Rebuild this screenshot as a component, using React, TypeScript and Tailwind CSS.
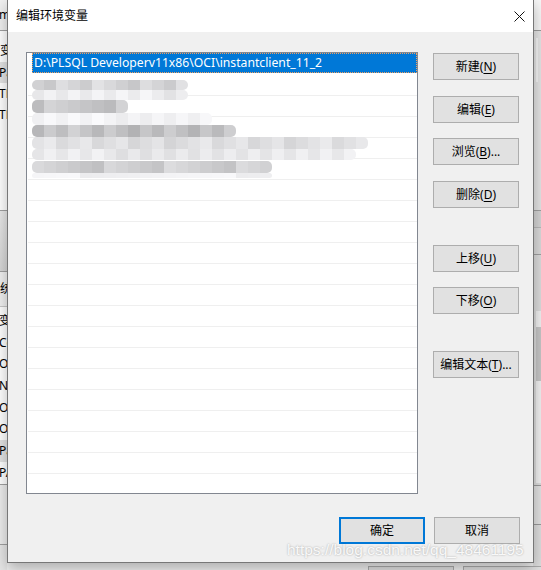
import React from 'react'

type Blob = { y: number; h: number; x0: number; x1: number; lo: number; hi: number }

// censored entries: mosaic cells, coordinates relative to list content box
const blobs: Blob[] = [
  { y: 27, h: 10, x0: 5, x1: 160, lo: 196, hi: 226 },
  { y: 37, h: 10, x0: 5, x1: 160, lo: 226, hi: 246 },
  { y: 47, h: 13, x0: 5, x1: 101, lo: 184, hi: 212 },
  { y: 60, h: 12, x0: 5, x1: 183, lo: 236, hi: 250 },
  { y: 72, h: 12, x0: 5, x1: 209, lo: 178, hi: 210 },
  { y: 84, h: 12, x0: 5, x1: 340, lo: 212, hi: 234 },
  { y: 96, h: 11, x0: 5, x1: 328, lo: 222, hi: 242 },
  { y: 108, h: 12, x0: 5, x1: 235, lo: 192, hi: 220 },
  { y: 120, h: 5, x0: 5, x1: 235, lo: 236, hi: 248 },
]

function Mosaic() {
  return (
    <div className="absolute inset-0 blur-[0.5px] pointer-events-none">
      {blobs.map((b, r) => {
        const n = Math.ceil((b.x1 - b.x0) / 12)
        return (
          <div key={r} className="absolute flex rounded-[5px] overflow-hidden" style={{ top: b.y, left: b.x0, height: b.h }}>
            {Array.from({ length: n }).map((_, i) => {
              const v = b.lo + ((i * 53 + r * 97 + 13) % (b.hi - b.lo + 1))
              return <div key={i} className="w-[12px] h-full" style={{ background: `rgb(${v},${v},${v + 2})` }} />
            })}
          </div>
        )
      })}
    </div>
  )
}

function Btn({ label, mn, tail = '', cls = '' }: { label: string; mn?: string; tail?: string; cls?: string }) {
  return (
    <button className={`w-[86px] h-[27px] bg-[#e1e1e1] border border-[#adadad] text-[12px] text-black flex items-center justify-center leading-none ${cls}`}>
      {label}
      {mn && (
        <>
          (<span className="underline underline-offset-2">{mn}</span>){tail}
        </>
      )}
    </button>
  )
}

const leftRows = ['变', 'Co', 'Or', 'NI', 'OI', 'OS', 'Pa', 'PA']

export default function App() {
  return (
    <div className="relative w-[541px] h-[570px] overflow-hidden bg-[#f0f0f0] font-['Noto_Sans','Noto_Sans_CJK_SC',sans-serif] text-black">
      {/* window behind, left edge */}
      <div className="absolute left-0 top-0 w-[7px] h-full overflow-hidden flex flex-col text-[12px] leading-none whitespace-nowrap">
        <div className="h-[31px] shrink-0 bg-[#f0f0f0] border-b border-[#a0a0a0] flex items-center -ml-[1px]">m</div>
        <div className="h-[31px] shrink-0 bg-white flex items-end pb-[5px]">变</div>
        <div className="h-[21px] shrink-0 bg-[#e3e3e3] flex items-center -ml-[1px]">Pa</div>
        <div className="h-[21px] shrink-0 bg-white flex items-center -ml-[1px]">TE</div>
        <div className="h-[21px] shrink-0 bg-white flex items-center -ml-[1px]">TM</div>
        <div className="h-[86px] shrink-0 bg-white border-b border-[#a0a0a0]" />
        <div className="h-[61px] shrink-0 bg-gradient-to-b from-[#e8e8e8] to-[#d6d6d6] border-b border-[#a0a0a0]" />
        <div className="h-[35px] shrink-0 bg-[#f0f0f0] border-b border-[#c8c8c8] flex items-center">统</div>
        <div className="h-[3px] shrink-0 bg-white" />
        {leftRows.map((t, i) => (
          <div key={i} className={`h-[21.7px] shrink-0 flex items-center -ml-[1px] ${t === 'Pa' ? 'bg-[#e3e3e3]' : 'bg-white'}`}>
            {t}
          </div>
        ))}
        <div className="h-[61px] shrink-0 border-t border-[#a0a0a0] bg-[#ececec] border-b" />
        <div className="flex-1 bg-[#e6e6e6]" />
      </div>

      {/* window behind, right edge */}
      <div className="absolute right-0 top-0 w-[8px] h-full flex flex-col">
        <div className="h-[31px] shrink-0 bg-[#f7f7f7] border-b border-[#9a9a9a]" />
        <div className="h-[180px] shrink-0 bg-[#e4e4e4] border-b border-[#a0a0a0] pl-[3px] pt-[7px]">
          <div className="w-[2px] h-[44px] bg-[#f4f4f4]" />
        </div>
        <div className="h-[17px] shrink-0 bg-[#d4d4d4] border-b border-[#b8b8b8]" />
        <div className="h-[27px] shrink-0 bg-[#dadada] border-b border-[#a0a0a0]" />
        <div className="h-[230px] shrink-0 bg-[#dcdcdc] pl-[3px] pt-[56px]">
          <div className="h-[172px] bg-[#f0f0f0] pt-[16px]">
            <div className="h-[54px] bg-[#c6c6c6]" />
          </div>
        </div>
        <div className="h-[40px] shrink-0 border-t border-[#9a9a9a] bg-[#e2e2e2] border-b" />
        <div className="flex-1 bg-[#dedede]" />
      </div>

      {/* buttons of the window behind */}
      <div className="absolute left-[368px] top-[566px] w-[86px] h-[27px] bg-[#e1e1e1] border border-[#adadad]" />
      <div className="absolute left-[463px] top-[566px] w-[86px] h-[27px] bg-[#e1e1e1] border border-[#adadad]" />

      {/* dialog */}
      <div className="absolute left-[7px] top-[-1px] w-[527px] h-[564px] border border-[#777777] bg-[#f0f0f0] flex flex-col shadow-[0_6px_14px_rgba(0,0,0,0.28)]">
        <div className="h-[32px] shrink-0 bg-white flex items-center justify-between pl-[8px] pr-[8px]">
          <span className="text-[12px] leading-none">编辑环境变量</span>
          <svg width="11" height="11" viewBox="0 0 11 11" className="mt-[1px]">
            <path d="M0.5 0.5L10.5 10.5M10.5 0.5L0.5 10.5" stroke="#111" strokeWidth="1" fill="none" />
          </svg>
        </div>

        <div className="flex-1 flex flex-col pl-[18px] pt-[20px] pr-[13px]">
          <div className="flex">
            <div className="relative w-[392px] h-[442px] shrink-0 border border-[#828790] bg-white overflow-hidden">
              <div className="h-[22px] pl-[5px]">
                <div className="h-[20px] bg-[#0078d7] border border-dotted border-[#f0a060] flex items-center pl-[1px] text-white text-[12.2px] leading-none whitespace-nowrap">
                  {'D:\\PLSQL Developerv11x86\\OCI\\instantclient_11_2'}
                </div>
              </div>
              {Array.from({ length: 19 }).map((_, i) => (
                <div key={i} className="h-[21px] ml-[1px] border-b border-[#efefef]" />
              ))}
              <Mosaic />
            </div>

            <div className="ml-[15px] pt-[1px] flex flex-col">
              <Btn label="新建" mn="N" />
              <Btn label="编辑" mn="E" cls="mt-[16px]" />
              <Btn label="浏览" mn="B" tail="..." cls="mt-[15px]" />
              <Btn label="删除" mn="D" cls="mt-[16px]" />
              <Btn label="上移" mn="U" cls="mt-[37px]" />
              <Btn label="下移" mn="O" cls="mt-[15px]" />
              <Btn label="编辑文本" mn="T" tail="..." cls="mt-[37px]" />
            </div>
          </div>

          <div className="mt-[23px] flex justify-end gap-[9px]">
            <button className="w-[86px] h-[27px] bg-[#e1e1e1] border-2 border-[#0078d7] text-[12px] leading-none">确定</button>
            <Btn label="取消" />
          </div>
        </div>
      </div>

      {/* watermark */}
      <div className="absolute left-[287px] top-[540px] text-[15.5px] leading-[20px] font-['Liberation_Sans',Arial,sans-serif] text-white/90 [text-shadow:0_0_2px_rgba(0,0,0,0.35)] whitespace-nowrap">
        https://blog.csdn.net/qq_48461195
      </div>
    </div>
  )
}
